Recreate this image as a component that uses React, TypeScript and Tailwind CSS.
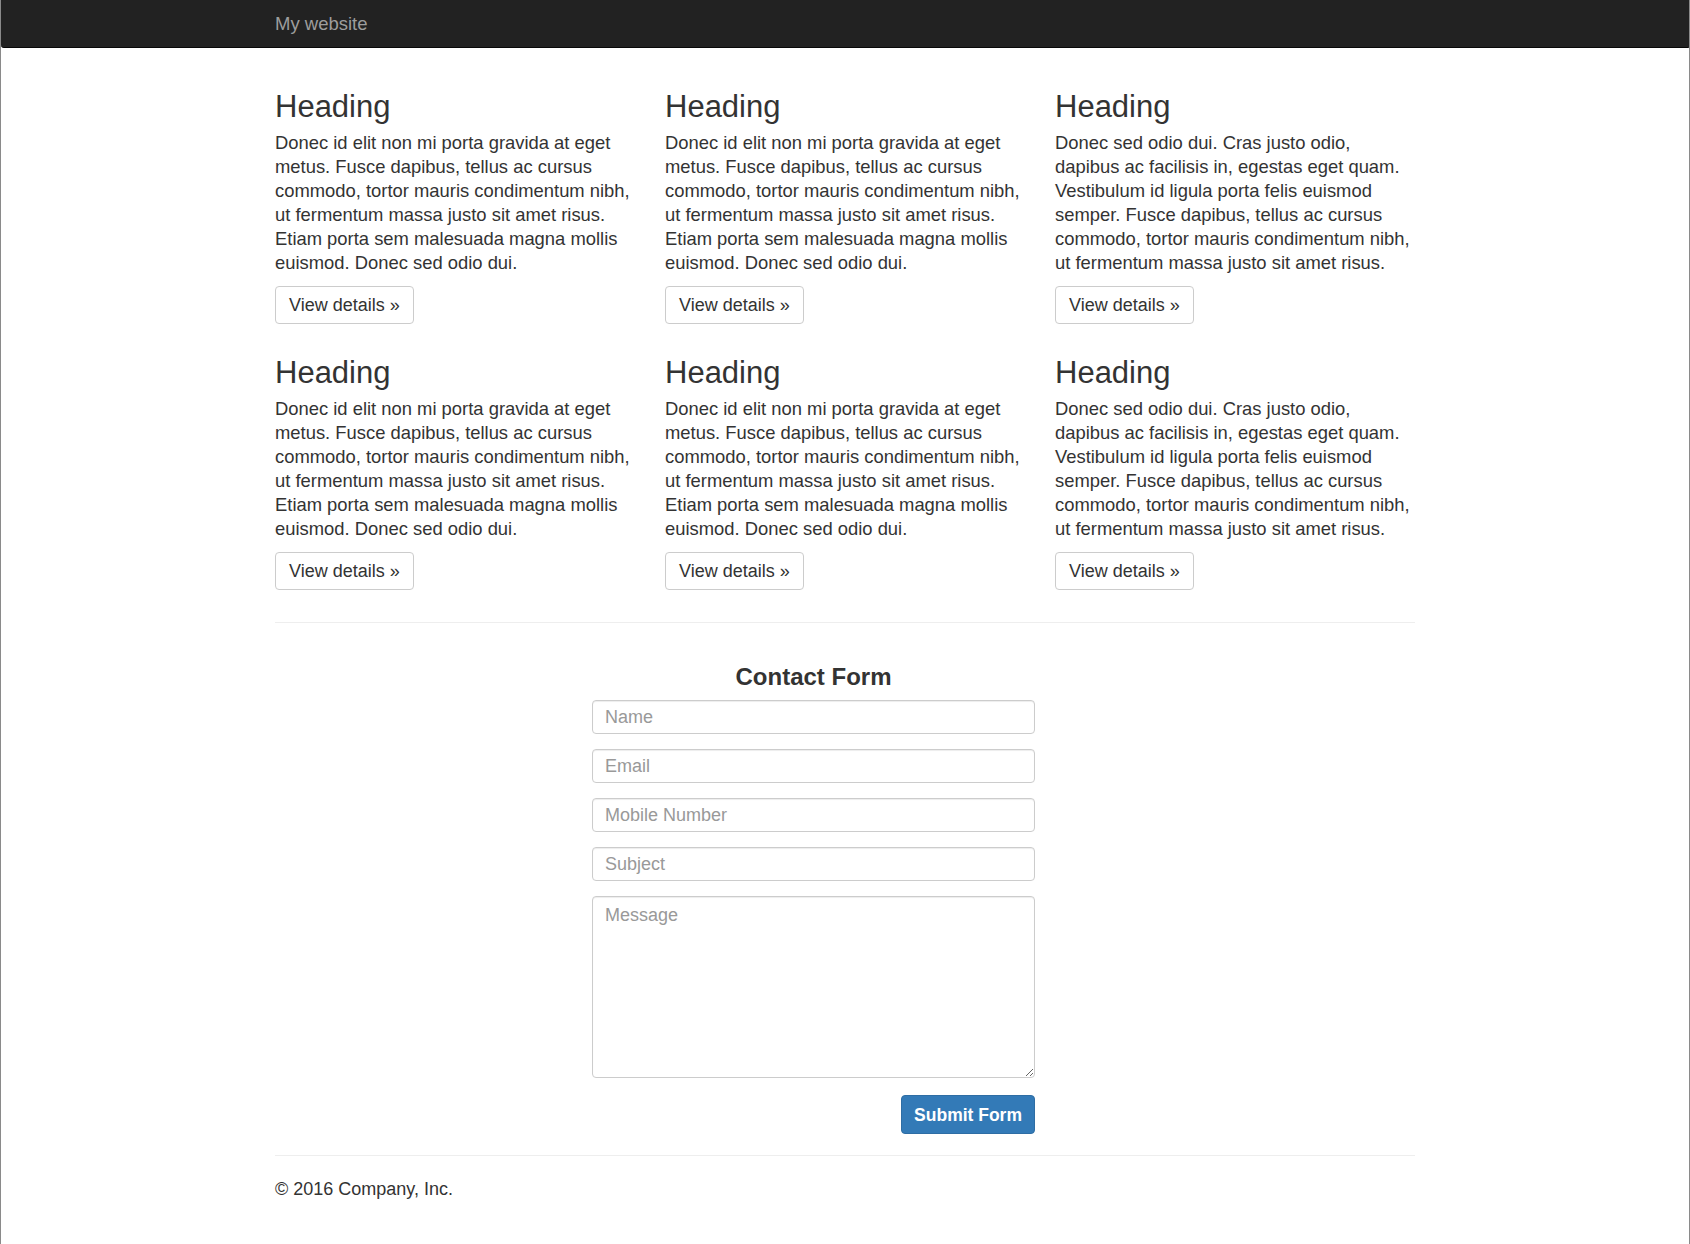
const cards = [
  {
    text: "Donec id elit non mi porta gravida at eget metus. Fusce dapibus, tellus ac cursus commodo, tortor mauris condimentum nibh, ut fermentum massa justo sit amet risus. Etiam porta sem malesuada magna mollis euismod. Donec sed odio dui.",
  },
  {
    text: "Donec id elit non mi porta gravida at eget metus. Fusce dapibus, tellus ac cursus commodo, tortor mauris condimentum nibh, ut fermentum massa justo sit amet risus. Etiam porta sem malesuada magna mollis euismod. Donec sed odio dui.",
  },
  {
    text: "Donec sed odio dui. Cras justo odio, dapibus ac facilisis in, egestas eget quam. Vestibulum id ligula porta felis euismod semper. Fusce dapibus, tellus ac cursus commodo, tortor mauris condimentum nibh, ut fermentum massa justo sit amet risus.",
  },
];

const fields = ["Name", "Email", "Mobile Number", "Subject"];

export default function App() {
  return (
    <div
      className="h-[1244px] border-x border-[#8a8a8a] bg-white text-[#333] text-[18px] leading-[24px]"
      style={{ fontFamily: '"Liberation Sans", Arial, sans-serif' }}
    >
      <nav className="h-[48px] bg-[#222] border-b border-[#080808] rounded-bl-[3px] rounded-br-[1px]">
        <div className="w-[1140px] mx-auto pt-[12px]">
          <a className="text-[18.5px] leading-[20px] text-[#9d9d9d]">My website</a>
        </div>
      </nav>

      <main className="w-[1140px] mx-auto pt-[41px]">
        <div className="grid grid-cols-3 gap-x-[30px] gap-y-[31px]">
          {[...cards, ...cards].map((card, i) => (
            <div key={i}>
              <h2 className="text-[31px] leading-[36px] font-normal">Heading</h2>
              <p className="mt-[6px] text-[18.4px]">{card.text}</p>
              <button className="mt-[11px] h-[38px] px-[13px] border border-[#ccc] rounded-[4px] bg-white text-[#333]">
                View details »
              </button>
            </div>
          ))}
        </div>

        <hr className="mt-[32px] border-t border-[#eee]" />

        <form className="ml-[317px] w-[443px] pt-[38px]">
          <h3 className="text-center text-[24px] leading-[32px] font-bold">Contact Form</h3>
          <div className="mt-[7px] flex flex-col gap-[15px]">
            {fields.map((f) => (
              <input
                key={f}
                placeholder={f}
                className="h-[34px] px-[12px] border border-[#ccc] rounded-[4px] shadow-[inset_0_1px_1px_rgba(0,0,0,0.075)] placeholder:text-[#999] outline-none"
              />
            ))}
            <textarea
              placeholder="Message"
              className="h-[182px] px-[12px] py-[6px] border border-[#ccc] rounded-[4px] shadow-[inset_0_1px_1px_rgba(0,0,0,0.075)] placeholder:text-[#999] outline-none"
            />
          </div>
          <div className="mt-[17px] flex justify-end">
            <button
              type="button"
              className="h-[39px] px-[12px] bg-[#337ab7] border border-[#2e6da4] rounded-[4px] text-white text-[17.5px] font-bold"
            >
              Submit Form
            </button>
          </div>
        </form>

        <hr className="mt-[21px] border-t border-[#eee]" />
        <footer className="pt-[21px]">
          <p>© 2016 Company, Inc.</p>
        </footer>
      </main>
    </div>
  );
}
